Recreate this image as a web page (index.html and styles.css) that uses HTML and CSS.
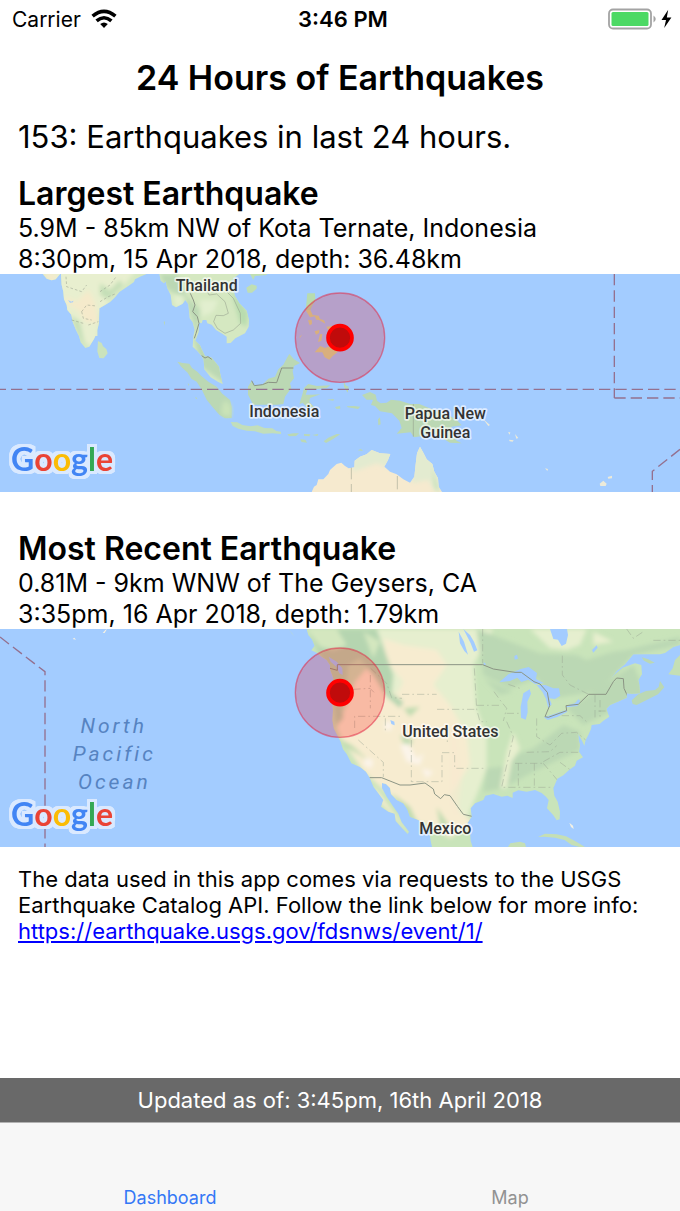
FILE: index.html
```html
<!DOCTYPE html>
<html lang="en">
<head>
<meta charset="utf-8">
<meta name="viewport" content="width=device-width, initial-scale=1">
<title>24 Hours of Earthquakes</title>
<link rel="stylesheet" href="styles.css">
</head>
<body>
<div class="app">
  <div class="status">
    <div class="status-left">
      <span>Carrier</span>
      <svg class="wifi" viewBox="0 0 26 20" aria-label="Wi-Fi">
        <path d="M1.6 7.2Q13-2.6 24.4 7.2M5.6 11.9Q13 5.6 20.4 11.9" fill="none" stroke="#000" stroke-width="3.6"/>
        <path d="M9.2 15.1Q13 12 16.8 15.1L13 19Z"/>
      </svg>
    </div>
    <span class="clock">3:46 PM</span>
    <div class="status-right">
      <svg class="battery" viewBox="0 0 66 22" aria-label="Battery charging">
        <rect x="1" y="1.5" width="42" height="19" rx="4" fill="#fff" stroke="#a3a3a3" stroke-width="1.8"/>
        <rect x="3.5" y="4" width="37" height="14" rx="1.5" fill="#4cd964"/>
        <path d="M45.5 7.5Q50 11 45.5 14.5Z" fill="#a3a3a3"/>
        <path d="M60.2 1.8 53.5 12H58L56.2 20 63.4 9.5H58.8Z"/>
      </svg>
    </div>
  </div>

  <main>
    <h1 class="title">24 Hours of Earthquakes</h1>
    <p class="summary">153: Earthquakes in last 24 hours.</p>

    <section class="quake">
      <h2 class="heading">Largest Earthquake</h2>
      <p class="detail">5.9M - 85km NW of Kota Ternate, Indonesia</p>
      <p class="detail">8:30pm, 15 Apr 2018, depth: 36.48km</p>
      <svg class="map" viewBox="0 12 2040 654" preserveAspectRatio="xMidYMid slice" role="img" aria-label="Map of the largest earthquake">
        <defs>
          <filter id="soft" x="-20%" y="-20%" width="140%" height="140%"><feGaussianBlur stdDeviation="6"/></filter>
          <filter id="outline" x="-10%" y="-20%" width="120%" height="140%" color-interpolation-filters="sRGB">
            <feMorphology in="SourceAlpha" operator="dilate" radius="8"/>
            <feGaussianBlur stdDeviation="2" result="edge"/>
            <feFlood flood-color="#dae9ff"/>
            <feComposite in2="edge" operator="in" result="glow"/>
            <feMerge><feMergeNode in="glow"/><feMergeNode in="glow"/><feMergeNode in="SourceGraphic"/></feMerge>
          </filter>
          <clipPath id="asia">
            <path d="M128 12 140 26 155 31 167 28 180 12ZM183 12 185 45 190 65 192 88 200 105 202 120 214 134 218 155 228 180 237 198 242 217 256 234 268 230 274 220 282 207 286 198 292 198 292 180 297 160 298 115 315 105 330 96 345 82 358 66 385 48 402 36 405 28 420 20 440 12ZM478 12 482 32 492 40 497 34 502 55 512 75 516 105 528 112 548 101 556 90 565 103 569 145 578 157 584 180 580 200 578 230 592 243 605 258 611 270 613 298 632 322 655 336 668 342 660 308 657 290 635 263 615 258 606 240 600 226 586 212 596 186 597 158 605 160 608 150 619 150 622 160 635 164 648 180 668 192 680 200 680 220 692 219 706 205 735 190 746 170 747 150 740 122 718 100 705 78 700 60 690 40 705 22 718 12Z"/>
          </clipPath>
          <clipPath id="oz"><path d="M935 666 942 650 950 645 955 628 970 628 985 612 990 600 1010 582 1024 578 1035 588 1046 595 1063 592 1064 572 1080 560 1100 553 1115 540 1140 550 1171 552 1164 570 1153 590 1170 605 1190 613 1210 628 1230 638 1243 620 1247 583 1251 550 1260 530 1270 548 1280 568 1297 582 1303 605 1314 625 1316 650 1326 666Z"/></clipPath>
        </defs>
        <rect y="12" width="2040" height="654" fill="#a3ccff"/>
        <g clip-path="url(#asia)">
          <rect y="12" width="760" height="340" fill="#d5e8c1"/>
          <g filter="url(#soft)">
            <path d="M120 0H410L300 130 290 240 230 200 180 90Z" fill="#e8efcf"/>
            <path d="M195 78 230 95 265 60 285 95 295 160 255 155 235 120 205 105ZM128 12H170V30H140Z" fill="#f5eacb"/>
            <path d="M300 40 330 60 360 30 370 45 325 90 300 75ZM210 135 240 155 255 225 235 200Z" fill="#c5dfb7"/>
            <path d="M478 12H530L560 80 600 120 590 200 578 150 555 80 525 70 500 55ZM580 200 680 270 680 345 605 290Z" fill="#bbd8b4"/>
            <path d="M520 75H550V110H525ZM600 90 655 90 640 125 605 140Z" fill="#e2efcf"/>
            <path d="M690 50 720 90 745 130 740 170 720 160Z" fill="#b8dcae"/>
          </g>
          <path d="M204 90 210 98 219 97 220 92 214 95Z" fill="#a3ccff"/>
        </g>
        <path class="forest" d="M532 275 548 279 568 281 576 294 592 305 604 318 625 335 650 350 667 371 690 390 695 410 695 444 675 445 658 434 640 414 620 389 606 360 590 335 574 326 563 308 545 292Z"/>
        <path d="M672 394 680 392 694 410 694 440 665 435 665 410Z" fill="#cae3b8" filter="url(#soft)"/>
        <g class="forest">
          <path fill="#cbe3bc" d="M294 213 305 219 309 229 319 237 323 250 311 265 298 264 292 244Z"/>
          <path fill="#c0dfb3" d="M739 53 755 43 770 47 770 56 756 68 743 68ZM750 12 760 30 765 18 800 15 800 12Z"/>
          <path fill="#c2debb" d="M692 456 712 457 727 465 752 469 773 466 793 474 817 475 829 483 843 485 843 492 817 490 790 491 765 484 740 482 715 476 698 468Z"/>
          <path d="M755 332 763 347 787 344 805 326 825 320 835 298 850 284 862 262 868 252 882 268 900 279 882 288 878 304 882 325 870 340 874 354 855 380 850 402 832 404 760 404 744 374 744 350ZM912 354 925 342 950 348 991 346 980 354 922 360 917 374 936 374 961 373 930 384 928 396 943 412 920 411 908 398 898 403 908 370ZM1031 333 1037 346 1046 350 1043 368 1032 350Z"/>
          <path d="M862 493 880 490 897 490 888 498 867 499ZM900 508 916 509 921 518 905 516ZM912 492 931 493 928 499 912 497ZM937 495 955 492 952 498ZM971 514 985 503 1010 492 1021 493 998 508 978 519ZM1005 411 1020 408 1021 416 1009 416ZM1040 409 1062 408 1081 410 1074 417 1043 412ZM981 389 1002 387 1000 392ZM1134 448 1140 442 1142 463 1135 466ZM1073 541 1083 537 1089 543ZM491 156 495 154 494 167ZM563 340 568 343 566 348ZM586 380 592 385 588 388Z"/>
          <path d="M1086 375 1110 366 1127 374 1131 392 1142 400 1160 398 1173 389 1200 392 1231 402 1258 402 1278 410 1315 425 1350 438 1370 450 1385 466 1355 470 1350 490 1370 512 1385 520 1350 518 1328 505 1298 490 1268 498 1242 502 1232 487 1190 491 1205 474 1198 452 1176 430 1140 424 1125 408 1113 405 1119 389 1100 389Z"/>
          <path fill="#b8dcae" d="M922 70 945 70 946 90 936 108 931 120 917 121Z"/>
          <path fill="#cfdf9f" d="M917 121 931 120 938 135 956 137 960 147 972 151 976 161 957 150 949 149 944 139 930 142ZM924 151 935 150 936 162 929 166ZM944 184 958 180 957 189 948 194ZM960 193 967 192 964 212 954 216ZM944 247 961 228 975 234 990 229 1000 239 1014 245 998 258 988 269 974 262 967 247ZM979 170 997 168 1000 190 990 188ZM898 201 907 193 900 203Z"/>
        </g>
        <g fill="#ecead9"><path d="M1450 448 1470 465 1465 468ZM1524 487 1531 487 1529 494ZM1527 509 1541 511 1538 515 1529 514ZM1545 492 1555 504 1549 506ZM1635 595 1644 597 1642 603ZM1799 641 1810 632 1820 641 1817 648H1801ZM1823 621 1836 617 1836 625 1825 626Z"/></g>
        <g clip-path="url(#oz)">
          <rect x="930" y="520" width="410" height="150" fill="#f6eacf"/>
          <path d="M1050 530H1180V600L1130 580 1060 605ZM1240 520H1320V666H1305L1285 630 1235 640Z" fill="#e3ebd0" filter="url(#soft)"/>
          <path d="M1295 590 1318 670 1305 650Z" fill="#b8dcae" filter="url(#soft)"/>
        </g>
        <g class="border">
          <path d="M755 332 763 347 787 344 805 337 830 338 845 294H880M571 70 580 90 585 105 578 125 592 140 597 160 588 190 583 205M605 257 615 264 624 260 635 268"/>
          <path class="thin" d="M620 60 627 75 650 72 675 95 685 130 670 137 648 136 641 155 652 175 675 190 700 180 722 160 721 130 700 85 680 65M1240 402V500M1054 593V628M1054 642V666M1192 618V658"/>
          <path class="thin" stroke-dasharray="8 6" d="M198 20 200 50 245 65 260 45M245 125 260 105 290 108M245 125 250 145 275 150M265 165 295 155M300 95 325 80 350 70M300 65 330 45 350 18M215 150 250 160"/>
        </g>
        <g class="boundary">
          <path d="M-16 358H2040M1843 12V384M1843 384H2040"/>
          <path d="M2040 538 1957 604V666"/>
        </g>
        <g class="place">
          <text x="620" y="62">Thailand</text>
          <text x="853" y="440">Indonesia</text>
          <text x="1336" y="448">Papua New</text>
          <text x="1336" y="503">Guinea</text>
        </g>
        <g class="marker"><circle class="halo" cx="1020" cy="203" r="134"/><circle class="ring" cx="1020" cy="203" r="36"/></g>
        <text class="logo" filter="url(#outline)" x="33" y="602"><tspan fill="#4285f4">G</tspan><tspan fill="#ea4335">o</tspan><tspan fill="#fbbc05">o</tspan><tspan fill="#4285f4">g</tspan><tspan fill="#34a853">l</tspan><tspan fill="#ea4335">e</tspan></text>
      </svg>
    </section>

    <section class="quake">
      <h2 class="heading">Most Recent Earthquake</h2>
      <p class="detail">0.81M - 9km WNW of The Geysers, CA</p>
      <p class="detail">3:35pm, 16 Apr 2018, depth: 1.79km</p>
      <svg class="map" viewBox="0 12 2040 654" preserveAspectRatio="xMidYMid slice" role="img" aria-label="Map of the most recent earthquake">
        <defs>
          <clipPath id="america">
            <path d="M920 12 925 30 936 43 944 62 934 76 950 83 965 95 980 105 990 120 990 132 1000 160 995 185 993 210 997 235 999 255 997 285 1001 310 1014 335 1022 350 1029 373 1040 387 1054 415 1080 426 1098 440 1109 458 1120 485 1135 505 1150 525 1143 545 1165 560 1184 566 1187 588 1201 604 1223 627 1227 620 1205 592 1195 566 1180 545 1160 515 1146 490 1146 474 1158 477 1170 489 1173 507 1190 525 1210 535 1222 553 1230 575 1255 585 1275 603 1288 621 1292 648 1296 666H1418L1412 648 1410 622 1402 595 1415 575 1412 550 1425 535 1450 525 1456 512 1480 507 1505 515 1522 512 1538 519 1538 503 1555 496 1580 500 1605 495 1625 504 1638 515 1646 525 1641 550 1660 571 1670 586 1679 583 1680 560 1673 530 1663 512 1660 490 1672 461 1690 451 1708 434 1725 422 1730 407 1749 397 1737 380 1740 360 1736 345 1735 327 1745 345 1753 362 1757 345 1765 330 1773 312 1775 300 1799 297 1810 287 1828 275 1823 263 1819 251 1830 240 1858 228 1880 218 1880 205 1895 206 1920 205 1918 180 1915 165 1926 148 1924 120 1905 115 1868 128 1845 148 1830 165 1850 138 1875 118 1900 88 1980 88 1995 84 2020 66 2040 60V12Z"/>
          </clipPath>
        </defs>
        <rect y="12" width="2040" height="654" fill="#a3ccff"/>
        <g clip-path="url(#america)">
          <rect x="850" y="12" width="1190" height="654" fill="#c9e4ba"/>
          <g filter="url(#soft)">
            <path fill="#e6efcf" d="M1130 12H1480L1420 120 1430 250 1460 330 1460 430 1430 510 1400 580 1350 620 1150 200ZM1590 12H1760L1740 60 1700 75 1650 70Z"/>
            <path fill="#f7ecd0" d="M1150 40 1210 60 1310 75 1340 120 1300 180 1350 240 1400 330 1410 420 1350 510 1380 560 1420 590 1350 640 1290 600 1240 590 1180 520 1090 440 1030 350 1010 310 1040 240 1065 170 1100 130 1140 170 1190 210 1210 170 1160 110ZM1120 480 1230 630 1130 520Z"/>
            <path fill="#b5d5b0" d="M920 12H1130L1155 80 1180 150 1175 205 1210 230 1200 250 1160 215 1120 150 1080 100 1045 120 1040 170 1020 210 1030 280 1010 300 990 180 960 90Z"/>
            <path fill="#d4e7bf" d="M920 12H1010L1040 60 1000 75 960 65ZM1090 20 1140 50 1120 100Z"/>
            <path fill="#bbd8b4" d="M1430 12 1530 50 1620 85 1730 90 1760 105 1840 80 1880 75 2040 35V60L1900 90 1830 165 1790 200 1660 220 1610 160 1530 190 1450 150ZM1700 250 1770 210 1900 120 1940 210 1830 260 1750 300ZM1600 370 1690 300 1740 320 1740 375 1600 440 1510 490 1450 500 1460 430 1510 425 1560 385ZM1450 160 1540 200 1500 210Z"/>
            <path fill="#c0dcb0" d="M1015 340 1055 360 1110 410 1080 390 1035 365ZM1175 505 1230 545 1260 610 1230 585ZM1210 250 1260 245 1230 275ZM1310 545 1350 605 1320 600ZM1200 330 1240 345 1220 380Z"/>
            <path fill="#fbf4e9" d="M1095 400 1120 405 1115 430 1090 420ZM1200 360 1225 355 1250 400 1270 385 1260 420 1220 410ZM1155 290H1175V315H1155ZM1265 430 1300 440 1280 460Z"/>
            <path fill="#e8efcf" d="M1540 320 1560 370 1535 410 1520 490 1500 490 1520 380ZM1780 20 1840 50 1780 60Z"/>
            <path fill="#f9e8cf" d="M1350 265 1370 320 1385 460 1370 580 1350 540Z" opacity=".5"/>
          </g>
          <g fill="#a3ccff">
            <path d="M1650 12 1660 42 1674 44 1685 63 1698 56 1704 30 1701 12ZM1376 20 1392 50 1404 89 1393 78 1380 55ZM1390 12 1410 30 1422 50 1432 76 1422 80 1412 55ZM1498 172 1525 148 1562 132 1586 126 1611 144 1608 162 1632 175 1606 178 1585 164 1564 171 1552 158 1530 168ZM1570 205 1589 193 1593 206 1582 230 1583 262 1577 284 1563 278 1562 245ZM1610 180 1636 180 1660 190 1677 190 1681 212 1665 222 1648 220 1655 238 1645 250 1638 222 1627 200ZM1632 277 1665 266 1698 255 1702 260 1672 276 1643 285ZM1698 242 1725 235 1735 223 1741 227 1732 243 1700 247ZM1776 75 1790 61 1793 68 1780 83ZM1543 93 1551 89 1554 101 1544 104ZM1451 112 1459 118 1451 121ZM986 95 1010 110 1027 130 1028 150 1018 145 1009 125 992 110ZM1171 285 1183 290 1184 301 1174 297ZM1925 166 1935 188 1962 187 1962 180 1950 193 1930 192Z"/>
          </g>
          <g class="border">
            <path d="M1012 119H1448L1480 132 1545 142 1564 142 1602 170 1620 177 1642 202 1649 242 1635 275 1645 277 1700 257 1698 242 1735 238 1766 208H1818L1840 170 1850 159 1870 161 1872 190 1883 214M1012 119V136L990 130M1108 458H1145L1200 480H1230L1275 474 1300 492 1304 507 1322 521 1333 509 1350 512 1373 545 1390 568 1416 574"/>
            <path class="state" d="M1064 309V274H1202M1156 280V316M1075 345 1150 412V456M1234 345V480M1111 150V250M1060 193 1110 190 1125 205M1112 130 1160 175 1175 218 1206 220M1206 208H1310M1311 253H1430M1326 383H1364V430H1455M1326 390V470H1230M1342 315V360M1423 130 1430 253 1440 290H1460M1430 241H1505M1482 200 1500 225 1520 250 1510 288M1520 265H1565M1448 12V115M1520 290 1540 335 1525 400 1512 455 1505 487H1660M1610 280V335L1650 360 1685 325 1730 322 1757 345M1580 382 1650 380 1670 362M1545 415H1630M1555 415V490M1603 415V485M1630 415 1672 465M1630 410 1680 382H1750M1680 412 1710 434M1687 92V150L1710 180 1766 208M1785 210V285M1800 225V275M1685 272H1740L1765 295M1795 258H1822M1880 12 1900 40 1930 20M1960 46H2040M1525 178 1560 190"/>
          </g>
        </g>
        <g class="forest">
          <path d="M866 12 884 35 876 26Z" fill="#c9dfb2"/>
          <path d="M1895 226 1915 208 1938 198 1965 195 1976 186 1980 168 1993 187 1974 208 1940 225 1910 240 1898 237ZM1925 97 1945 103 1964 113 1950 116 1932 107Z"/>
          <path d="M2005 148 2018 130 2025 105 2040 90V152ZM1614 636 1635 626 1670 628 1698 634 1725 648 1755 666H1738L1715 660 1694 645 1665 638 1633 635ZM1524 666 1531 655 1560 650 1575 655 1578 666Z" fill="#c5dfb5"/>
        </g>
        <path d="M308 24 316 15 321 12 314 24ZM218 42 223 38 228 44ZM1708 593 1719 602 1721 612 1713 606Z" fill="#f4f1e4"/>
        <path class="boundary" d="M0 36 135 140V666"/>
        <g class="ocean"><text x="341" y="323">North</text><text x="343" y="407">Pacific</text><text x="343" y="491">Ocean</text></g>
        <g class="place"><text x="1351" y="337">United States</text><text x="1336" y="628">Mexico</text></g>
        <g class="marker"><circle class="halo" cx="1020" cy="203" r="134"/><circle class="ring" cx="1020" cy="203" r="36"/></g>
        <text class="logo" filter="url(#outline)" x="33" y="602"><tspan fill="#4285f4">G</tspan><tspan fill="#ea4335">o</tspan><tspan fill="#fbbc05">o</tspan><tspan fill="#4285f4">g</tspan><tspan fill="#34a853">l</tspan><tspan fill="#ea4335">e</tspan></text>
      </svg>
    </section>

    <p class="note">The data used in this app comes via requests to the USGS Earthquake Catalog API. Follow the link below for more info: <a href="https://earthquake.usgs.gov/fdsnws/event/1/">https://earthquake.usgs.gov/fdsnws/event/1/</a></p>
  </main>

  <div class="updated">Updated as of: 3:45pm, 16th April 2018</div>
  <nav class="tabs">
    <button class="tab active" type="button">Dashboard</button>
    <button class="tab" type="button">Map</button>
  </nav>
</div>
</body>
</html>
```
FILE: styles.css
```css
* { box-sizing: border-box; }
body {
  margin: 0;
  background: #fff;
  color: #000;
  font-family: Inter, "Liberation Sans", sans-serif;
}
h1, h2, p { margin: 0; }
.app { min-height: 100vh; display: flex; flex-direction: column; }
main { flex: 1; }

.status {
  display: grid;
  grid-template-columns: 1fr auto 1fr;
  align-items: center;
  height: 38px;
  padding: 0 6px 0 12px;
  font-size: 21px;
}
.status-left { display: flex; align-items: center; gap: 10px; }
.status-right { display: flex; justify-content: flex-end; }
.clock { font-size: 22px; font-weight: 600; }
.wifi { width: 26px; height: 20px; }
.battery { width: 66px; height: 22px; }

.title { padding-top: 19px; font-size: 34px; line-height: 42px; font-weight: 600; text-align: center; }
.summary { padding: 18px 18px; font-size: 31px; line-height: 40px; }
.quake + .quake { margin-top: 38px; }
.heading { padding: 0 18px; font-size: 32px; line-height: 38px; font-weight: 600; }
.detail { padding: 0 18px; font-size: 25px; line-height: 31px; }
.detail:last-of-type { line-height: 30px; }
.note { padding: 19px 18px; font-size: 22px; line-height: 26px; }
.note a { display: block; color: #00f; }

.map { display: block; width: 100%; height: 218px; }
.forest { fill: #bbd8b4; }
.border { fill: none; stroke: #8b9484; stroke-width: 3; }
.thin { stroke-width: 2; stroke-opacity: .7; }
.state { stroke: #9aa593; stroke-width: 2; stroke-opacity: .7; stroke-dasharray: 22 9 5 9; }
.boundary { fill: none; stroke: #94708f; stroke-width: 4; stroke-dasharray: 34 15; }
.place text, .ocean text { text-anchor: middle; font-family: Roboto, sans-serif; font-size: 48px; }
.place text {
  fill: #333;
  font-weight: 500;
  stroke: #fff;
  stroke-opacity: .65;
  stroke-width: 10px;
  stroke-linejoin: round;
  paint-order: stroke;
}
.ocean text { fill: #5683c1; font-size: 63px; font-style: italic; letter-spacing: 9px; }
.halo { fill: rgba(255, 0, 0, .21); stroke: rgba(225, 40, 70, .55); stroke-width: 4; }
.ring { fill: #c00b0b; stroke: #f00; stroke-width: 11; }
.logo {
  font-family: Lato, sans-serif;
  font-size: 96px;
  font-weight: 700;
}

.updated {
  padding: 0 18px;
  background: #696969;
  color: #fff;
  font-size: 22px;
  line-height: 44px;
  text-align: center;
}
.tabs {
  display: flex;
  height: 89px;
  border-top: 1px solid #b2b2b2;
  background: #f7f7f7;
}
.tab {
  flex: 1;
  display: flex;
  align-items: flex-end;
  justify-content: center;
  padding: 0;
  border: 0;
  background: none;
  color: #929292;
  font-family: inherit;
  font-size: 18px;
  line-height: 26px;
}
.tab.active { color: #3478f6; }
```
